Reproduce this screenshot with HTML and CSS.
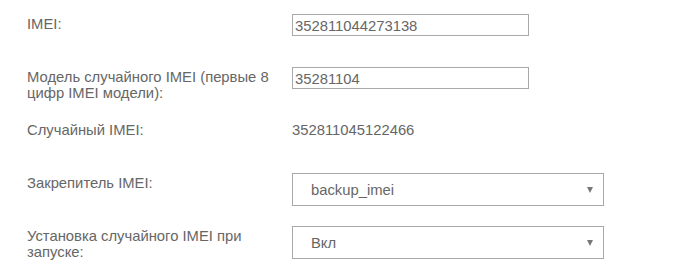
FILE: index.html
```html
<!DOCTYPE html>
<html lang="ru">
<head>
<meta charset="utf-8">
<link rel="stylesheet" href="styles.css">
</head>
<body>
<div class="form">
  <div class="row">
    <div class="label">IMEI:</div>
    <div class="field"><div class="input">352811044273138</div></div>
  </div>
  <div class="row">
    <div class="label">Модель случайного IMEI (первые 8 цифр IMEI модели):</div>
    <div class="field"><div class="input">35281104</div></div>
  </div>
  <div class="row">
    <div class="label">Случайный IMEI:</div>
    <div class="field"><div class="value">352811045122466</div></div>
  </div>
  <div class="row">
    <div class="label">Закрепитель IMEI:</div>
    <div class="field"><div class="select"><span>backup_imei</span><span class="arrow"></span></div></div>
  </div>
  <div class="row">
    <div class="label">Установка случайного IMEI при запуске:</div>
    <div class="field"><div class="select"><span>Вкл</span><span class="arrow"></span></div></div>
  </div>
</div>
</body>
</html>
```
FILE: styles.css
```css
html, body {
  margin: 0;
  padding: 0;
  background: #fff;
}
body {
  font-family: "Liberation Sans", Arial, sans-serif;
  font-size: 14.8px;
  line-height: 16px;
  color: #666;
}
.form {
  padding: 14px 0 0 27px;
}
.row {
  display: flex;
  align-items: flex-start;
  height: 53px;
}
.label {
  width: 255px;
  padding-right: 10px;
  padding-top: 2px;
}
.input {
  box-sizing: border-box;
  width: 237px;
  height: 22px;
  border: 1px solid #a9a9a9;
  padding: 2px 2px 0;
  line-height: 18px;
}
.value {
  padding-top: 2px;
}
.select {
  box-sizing: border-box;
  width: 312px;
  height: 33px;
  border: 1px solid #a9a9a9;
  display: flex;
  align-items: center;
  justify-content: space-between;
  padding: 0 10px 0 18px;
}
.arrow {
  width: 0;
  height: 0;
  border-left: 3.5px solid transparent;
  border-right: 3.5px solid transparent;
  border-top: 6px solid #777;
}
```
